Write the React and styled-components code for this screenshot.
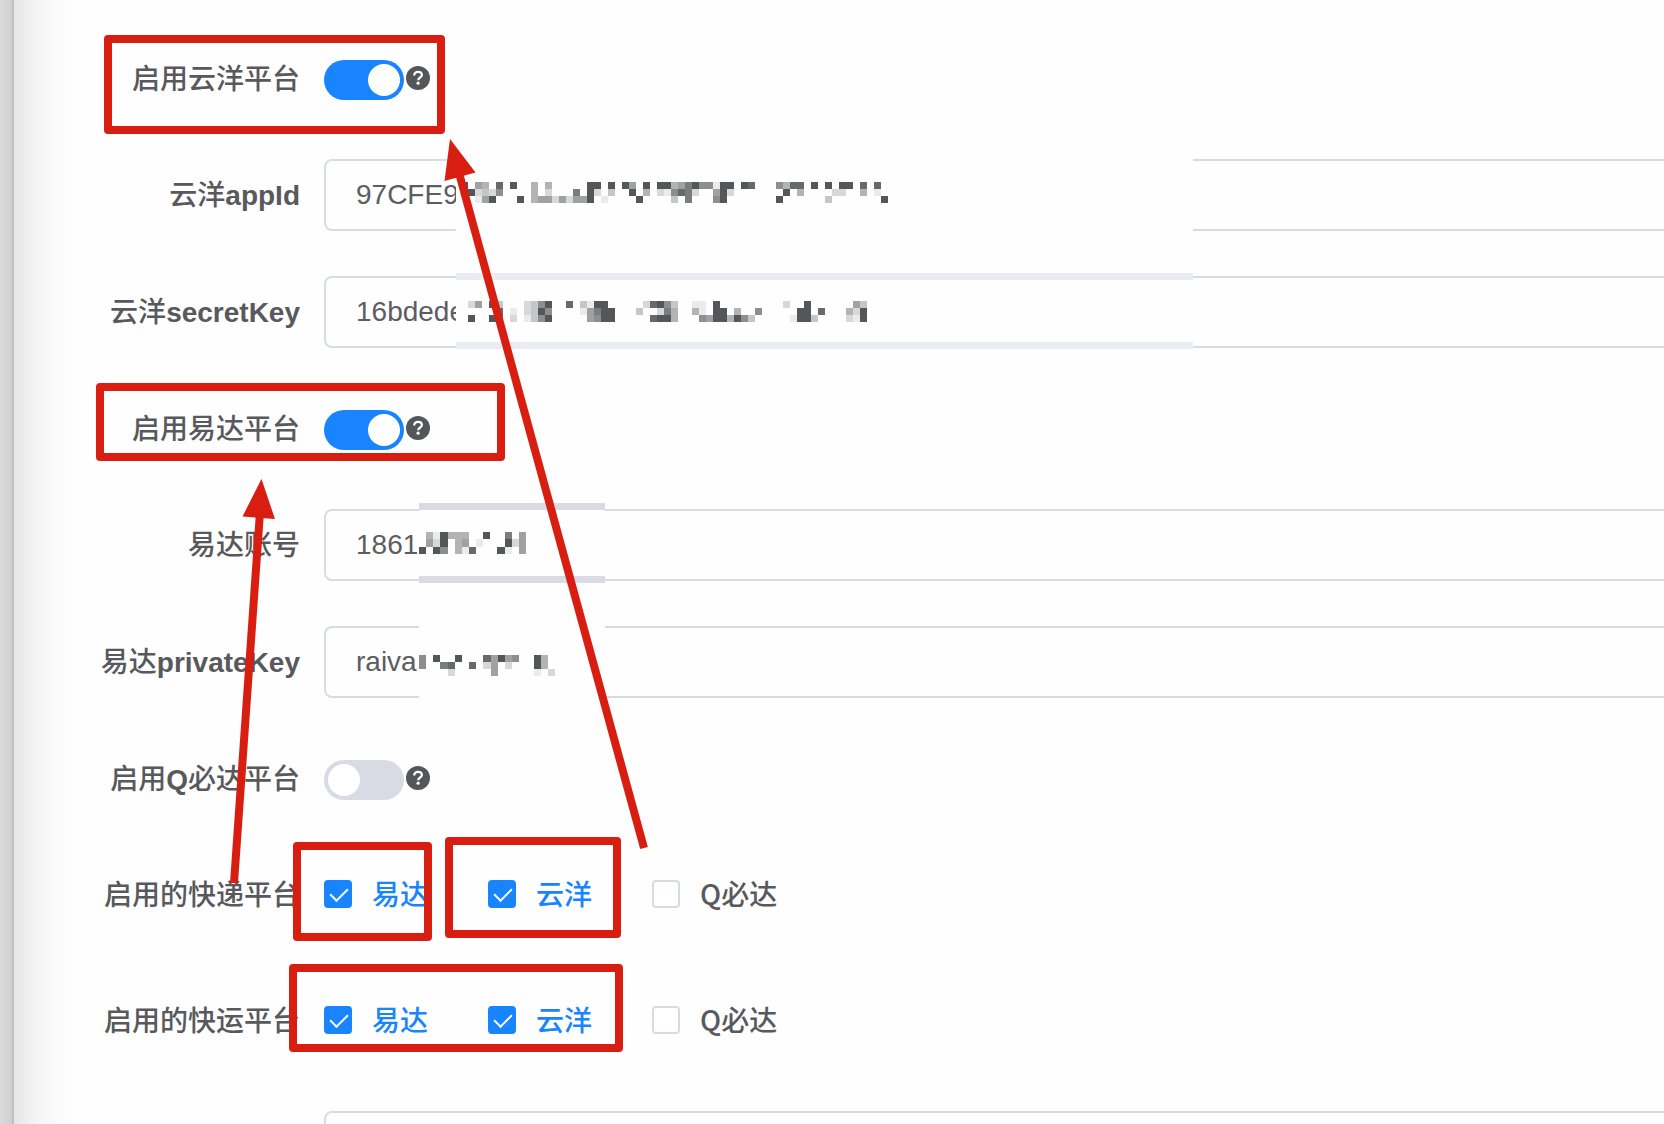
import React, { useState } from "react";
import styled, { createGlobalStyle } from "styled-components";

const GlobalStyle = createGlobalStyle`
  * {
    box-sizing: border-box;
  }
  body {
    margin: 0;
    background: #fefefe;
    color: #58595d;
    font-family: "Liberation Sans", "Noto Sans CJK SC", sans-serif;
    font-size: 28px;
  }
`;

const Page = styled.div`
  position: relative;
  display: flex;
  height: 100vh;
  overflow: hidden;
`;

const Gutter = styled.div`
  flex: 0 0 14px;
  background: linear-gradient(to right, #dcdcdc, #cfcfcf);
  border-right: 2px solid #bcc2c8;
`;

const Main = styled.main`
  flex: 1;
  min-width: 0;
  padding-top: 43px;
  background: linear-gradient(to right, #e6e6e6, #f5f5f5 24px, #fbfbfb 44px, #fefefe 64px);
`;

// the form is wider than the window, its right edge is cut off
const Form = styled.form`
  display: flex;
  flex-direction: column;
  gap: 45px;
  margin-right: -40px;
`;

const Row = styled.div`
  display: grid;
  grid-template-columns: 286px 1fr;
  column-gap: 24px;
  min-height: ${(p) => p.$height || 72}px;
`;

const Label = styled.label`
  line-height: 68px;
  text-align: right;
  white-space: nowrap;
  font-family: "Noto Sans CJK SC", sans-serif;
  font-weight: 500;

  b {
    font-family: "Liberation Sans", sans-serif;
    font-weight: 700;
  }
`;

const Control = styled.div`
  position: relative;
  grid-column: 2;
  display: flex;
  align-items: center;
  height: ${(p) => p.$height || 72}px;
`;

const TextInput = styled.input`
  width: 100%;
  height: 72px;
  padding: 0 30px;
  border: 2px solid #d8dbe5;
  border-radius: 8px;
  outline: none;
  background: #fefefe;
  color: #5c5d61;
  font: inherit;
`;

const SwitchInput = styled.input`
  appearance: none;
  display: flex;
  width: 80px;
  height: 40px;
  margin: 2px 2px 0 0;
  padding: 4px;
  border-radius: 20px;
  background: #d8dbe4;
  cursor: pointer;

  &::after {
    content: "";
    width: 32px;
    height: 32px;
    border-radius: 50%;
    background: #fff;
  }

  &:checked {
    justify-content: flex-end;
    background: #1885ff;
  }
`;

const HelpIcon = styled.svg`
  width: 24px;
  height: 24px;
  margin-bottom: 2px;
`;

const CheckLabel = styled.label`
  display: flex;
  align-items: center;
  gap: 20px;
  margin-right: 60px;
  font-family: "Noto Sans CJK SC", sans-serif;
  font-weight: 500;
  color: ${(p) => (p.$on ? "#1885ff" : "#58595d")};
`;

const CheckText = styled.span`
  padding-bottom: 2px;
  line-height: 68px;
`;

const CheckInput = styled.input`
  appearance: none;
  position: relative;
  width: 28px;
  height: 28px;
  margin: 0;
  border: 2px solid #d8dbe4;
  border-radius: 4px;
  background: #fff;

  &:checked {
    border-color: #1885ff;
    background: #1885ff;
  }

  &:checked::after {
    content: "";
    position: absolute;
    left: 8px;
    top: 2px;
    width: 8px;
    height: 15px;
    border: solid #fff;
    border-width: 0 2px 2px 0;
    transform: rotate(45deg);
    transform-origin: center;
  }
`;

const Cover = styled.div`
  position: absolute;
  left: ${(p) => p.$left}px;
  top: ${(p) => p.$top}px;
  width: ${(p) => p.$width}px;
  padding-top: ${(p) => p.$pad}px;
  height: ${(p) => p.$height}px;
  border: solid ${(p) => p.$band || "#fefefe"};
  border-width: 7px 0;
  background: #fefefe;

  svg {
    display: block;
  }
`;

const Marks = styled.svg`
  position: absolute;
  left: 0;
  top: 0;
  pointer-events: none;
`;

// each digit is the darkness of one tile, a dot is an empty tile
const APP_ID = [
  "9.54.8.9..4.4.....99.9.95.9.99457966199.98...6488.9.9.99.8.8.",
  "492326....4.2...7.92.3..9.4.216872..592.......9.4....22..4.1.",
  "..159...9.455252559.1....9....3.7...69.......9......3.......9",
];
const SECRET = [
  ".25.93...2369..8.3199.....28963..11.9.........2..9......53",
  ".....8.1.2396....15799...3..274..41.99.4..6.....99.8...429",
  ".9..98.2.1369.....5699.....8994...65994963.....1993....219",
];
const ACCOUNT = [".419444..9..7.5", ".529.45.1...925", "9.96.418...91.5"];
const PRIVATE = [
  "6.9..9...85956..94.",
  "6..78..8.25.2...94.",
  "....2.....5.....1.2",
];

const Mosaic = ({ tiles, width, height, inset }) => (
  <svg
    width={width}
    height={height}
    viewBox={`0 0 ${tiles[0].length} ${tiles.length}`}
    preserveAspectRatio="none"
    shapeRendering="crispEdges"
    style={{ marginLeft: inset }}
    aria-hidden="true"
  >
    {tiles.map((line, y) =>
      line.split("").map((c, x) =>
        c === "." ? null : (
          <rect
            key={x + "-" + y}
            x={x}
            y={y}
            width="1"
            height="1"
            fill="#55565a"
            fillOpacity={c / 9}
          />
        )
      )
    )}
  </svg>
);

const Help = () => (
  <HelpIcon viewBox="0 0 24 24" aria-hidden="true">
    <circle cx="12" cy="12" r="12" fill="#55565a" />
    <path
      d="M8.2 9.4C8.2 7 9.800 5.800 12 5.800s3.900 1.200 3.900 3.200c0 2.500-3.700 2.500-3.700 5.200"
      fill="none"
      stroke="#fff"
      strokeWidth="2.2"
    />
    <circle cx="12.1" cy="17.2" r="1.6" fill="#fff" />
  </HelpIcon>
);

const Field = ({ id, label, value, children }) => {
  const [text, setText] = useState(value);
  return (
    <Row>
      {label && <Label htmlFor={id}>{label}</Label>}
      <Control>
        <TextInput
          id={id}
          type="text"
          aria-label={label ? undefined : id}
          value={text}
          onChange={(e) => setText(e.target.value)}
        />
        {children}
      </Control>
    </Row>
  );
};

const SwitchRow = ({ id, label, on }) => (
  <Row $height={71}>
    <Label htmlFor={id}>{label}</Label>
    <Control $height={71}>
      <SwitchInput id={id} type="checkbox" role="switch" defaultChecked={on} />
      <Help />
    </Control>
  </Row>
);

const platforms = ["易达", "云洋", "Q必达"];

const CheckRow = ({ id, label }) => {
  const [checked, setChecked] = useState(["易达", "云洋"]);

  const toggle = (name) => {
    setChecked(
      checked.includes(name)
        ? checked.filter((c) => c !== name)
        : [...checked, name]
    );
  };

  return (
    <Row $height={81} role="group" aria-labelledby={id}>
      <Label as="span" id={id}>
        {label}
      </Label>
      <Control $height={70}>
        {platforms.map((name) => (
          <CheckLabel key={name} $on={checked.includes(name)}>
            <CheckInput
              type="checkbox"
              checked={checked.includes(name)}
              onChange={() => toggle(name)}
            />
            <CheckText>{name}</CheckText>
          </CheckLabel>
        ))}
      </Control>
    </Row>
  );
};

// [x, y, width, height] of the red frames
const frames = [
  [108, 39, 333, 91],
  [100, 387, 401, 70],
  [297, 846, 131, 91],
  [449, 841, 168, 93],
  [293, 968, 326, 80],
];

const Annotations = () => (
  <Marks width="700" height="1124" aria-hidden="true">
    <g fill="none" stroke="#d81e11" strokeWidth="8" strokeLinejoin="round">
      {frames.map(([x, y, w, h]) => (
        <rect key={y} x={x} y={y} width={w} height={h} />
      ))}
      <path d="M459 173L644 848M260 512L234 883" />
    </g>
    <path
      d="M450 139L475.500 172.500L444.500 181ZM261.500 479L275 519L242.500 516.500Z"
      fill="#d81e11"
    />
  </Marks>
);

export default function App() {
  return (
    <Page>
      <GlobalStyle />
      <Gutter />
      <Main>
        <Form>
          <SwitchRow id="yunyang" label="启用云洋平台" on />
          <Field id="appId" label={<>云洋<b>appId</b></>} value="97CFE9">
            <Cover $left={132} $width={737} $top={-3} $height={78} $pad={19}>
              <Mosaic tiles={APP_ID} width={427} height={21} inset={5} />
            </Cover>
          </Field>
          <Field id="secretKey" label={<>云洋<b>secretKey</b></>} value="16bdede">
            <Cover $left={132} $width={737} $top={-3} $height={76} $pad={21} $band="#ebecf1">
              <Mosaic tiles={SECRET} width={406} height={21} inset={5} />
            </Cover>
          </Field>
          <SwitchRow id="yida" label="启用易达平台" on />
          <Field id="account" label="易达账号" value="1861">
            <Cover $left={95} $width={186} $top={-6} $height={80} $pad={22} $band="#d8dbe4">
              <Mosaic tiles={ACCOUNT} width={107} height={22} inset={0} />
            </Cover>
          </Field>
          <Field id="privateKey" label={<>易达<b>privateKey</b></>} value="raiva">
            <Cover $left={95} $width={186} $top={-3} $height={78} $pad={25}>
              <Mosaic tiles={PRIVATE} width={136} height={21} inset={0} />
            </Cover>
          </Field>
          <SwitchRow id="qbida" label={<>启用<b>Q</b>必达平台</>} />
          <CheckRow id="kuaidi" label="启用的快递平台" />
          <CheckRow id="kuaiyun" label="启用的快运平台" />
          <Field id="extra" value="" />
        </Form>
      </Main>
      <Annotations />
    </Page>
  );
}
